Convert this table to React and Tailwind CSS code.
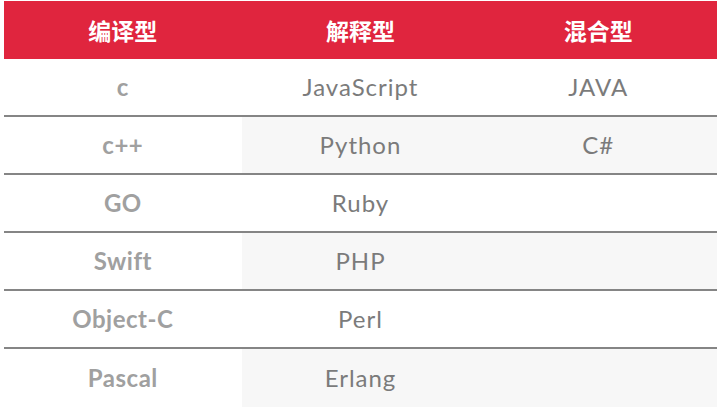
import React from "react";

const ROWS = [
  ["c", "JavaScript", "JAVA"],
  ["c++", "Python", "C#"],
  ["GO", "Ruby", ""],
  ["Swift", "PHP", ""],
  ["Object-C", "Perl", ""],
  ["Pascal", "Erlang", ""],
];

const HEADERS = ["编译型", "解释型", "混合型"];

const LATIN = { fontFamily: "Lato, 'Noto Sans CJK SC', sans-serif" };

export default function App() {
  return (
    <div className="w-[722px] h-[409px] bg-white overflow-hidden pt-px pl-1">
      <div className="w-[713px]">
        {/* header */}
        <div
          className="grid grid-cols-3 h-[58px] bg-[#e0253e] text-white text-[23px] font-bold"
          style={{ fontFamily: "'Noto Sans CJK SC', sans-serif" }}
        >
          {HEADERS.map((h) => (
            <div key={h} className="flex items-center justify-center">
              {h}
            </div>
          ))}
        </div>

        {/* body */}
        {ROWS.map((row, i) => {
          const shaded = i % 2 === 1;
          const last = i === ROWS.length - 1;
          return (
            <div
              key={i}
              className={
                "grid grid-cols-3 h-[58px] text-[24px] tracking-[1px] " +
                (last ? "" : "border-b-2 border-[#858585]")
              }
              style={LATIN}
            >
              <div className="flex items-center justify-center bg-white text-[#a0a0a0] font-bold tracking-[0.5px]">
                {row[0]}
              </div>
              <div
                className={
                  "flex items-center justify-center text-[#7b7b7b] " +
                  (shaded ? "bg-[#f7f7f7]" : "bg-white")
                }
              >
                {row[1]}
              </div>
              <div
                className={
                  "flex items-center justify-center text-[#7b7b7b] " +
                  (shaded ? "bg-[#f7f7f7]" : "bg-white")
                }
              >
                {row[2]}
              </div>
            </div>
          );
        })}
      </div>
    </div>
  );
}
